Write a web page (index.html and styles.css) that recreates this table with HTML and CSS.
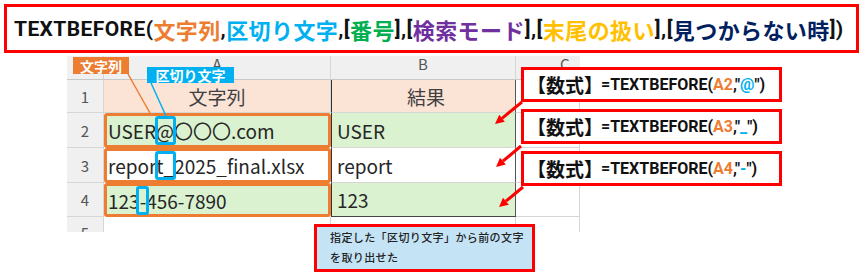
FILE: index.html
```html
<!DOCTYPE html>
<html lang="ja">
<head>
<meta charset="utf-8">
<link rel="stylesheet" href="styles.css">
</head>
<body>
<div class="page">
  <div class="title">TEXTBEFORE(<span class="j or">文字列</span>,<span class="j cy">区切り文字</span>,[<span class="j gr">番号</span>],[<span class="j pu">検索モード</span>],[<span class="j go">末尾の扱い</span>],[<span class="j nv">見つからない時</span>])</div>

  <div class="sheet">
    <div class="cell hd corner"></div>
    <div class="cell hd colh">A</div>
    <div class="cell hd colh">B</div>
    <div class="cell hd colh colc">C</div>

    <div class="cell rn">1</div>
    <div class="cell pk ctr">文字列</div>
    <div class="cell pk ctr bcol">結果</div>
    <div class="cell"></div>

    <div class="cell rn">2</div>
    <div class="cell gn hl">USER<span class="sep">@</span>〇〇〇.com</div>
    <div class="cell gn bcol">USER</div>
    <div class="cell"></div>

    <div class="cell rn">3</div>
    <div class="cell hl">repor<span class="sep">t_</span>2025_final.xlsx</div>
    <div class="cell bcol">report</div>
    <div class="cell"></div>

    <div class="cell rn">4</div>
    <div class="cell gn hl">123<span class="sep sep-w">-</span>456-7890</div>
    <div class="cell gn bcol blast">123</div>
    <div class="cell"></div>

    <div class="cell rn rn5">5</div>
    <div class="cell"></div>
    <div class="cell"></div>
    <div class="cell"></div>
  </div>

  <div class="tag tag-or">文字列</div>
  <div class="tag tag-cy">区切り文字</div>

  <div class="formulas">
    <div class="fbox"><span class="fj">【数式】</span>=TEXTBEFORE(<span class="or">A2</span>,"<span class="cy">@</span>")</div>
    <div class="fbox"><span class="fj">【数式】</span>=TEXTBEFORE(<span class="or">A3</span>,"<span class="cy">_</span>")</div>
    <div class="fbox"><span class="fj">【数式】</span>=TEXTBEFORE(<span class="or">A4</span>,"<span class="cy">-</span>")</div>
  </div>

  <div class="note">指定した「区切り文字」から前の文字<br>を取り出せた</div>

  <svg class="lines" width="868" height="278" viewBox="0 0 868 278">
    <line x1="128" y1="74" x2="150" y2="113" stroke="#ed7d31" stroke-width="1.5"/>
    <line x1="151" y1="83" x2="166" y2="116" stroke="#00b0f0" stroke-width="1.5"/>
    <line x1="522" y1="102" x2="502" y2="118.3" stroke="#ff0000" stroke-width="3"/>
    <polygon points="495,124 504.8,121.8 499.2,114.8" fill="#ff0000"/>
    <line x1="521" y1="146" x2="502.9" y2="161.2" stroke="#ff0000" stroke-width="3"/>
    <polygon points="496,167 505.8,164.6 500,157.7" fill="#ff0000"/>
    <line x1="523" y1="187" x2="505.9" y2="201.2" stroke="#ff0000" stroke-width="3"/>
    <polygon points="499,207 508.8,204.7 503,197.7" fill="#ff0000"/>
  </svg>
</div>
</body>
</html>
```

FILE: styles.css
```css
* { box-sizing: border-box; }
html, body { margin: 0; padding: 0; background: #fff; }
.page {
  position: relative;
  width: 868px;
  height: 278px;
  overflow: hidden;
  font-family: "Noto Sans CJK JP", sans-serif;
}
.title {
  margin: 4px 0 0 4px;
  width: 855px;
  height: 49px;
  border: 3px solid #ff0000;
  padding-left: 7px;
  display: flex;
  align-items: center;
  white-space: nowrap;
  font-family: Roboto, "Noto Sans CJK JP", sans-serif;
  font-weight: 700;
  font-size: 21px;
  letter-spacing: 0.4px;
  color: #111;
}
.title .j { font-family: "Noto Sans CJK JP", sans-serif; font-size: 22px; }
.or { color: #ed7d31; }
.cy { color: #00b0f0; }
.gr { color: #00b050; }
.pu { color: #7030a0; }
.go { color: #ffc000; }
.nv { color: #002060; }

.sheet {
  margin: 3px 0 0 67px;
  width: 513px;
  height: 176px;
  overflow: hidden;
  display: grid;
  grid-template-columns: 37px 227px 185px 64px;
  grid-template-rows: 24px 33px 35px 35px 34px 34px;
  background: #fff;
}
.cell {
  border-right: 1px solid #d6d6d6;
  border-bottom: 1px solid #d6d6d6;
  display: flex;
  align-items: center;
  padding-left: 4px;
  font-size: 19px;
  color: #262626;
  white-space: nowrap;
}
.hd {
  background: #f0f0f0;
  align-items: flex-start;
  justify-content: center;
  padding-left: 0;
  font-size: 15px;
  line-height: 15px;
  color: #555;
  border-bottom-color: #c8c8c8;
}
.colh { margin-top: -4px; padding-top: 4px; }
.colc { justify-content: flex-start; padding-left: 44px; border-right: none; }
.rn {
  background: #f0f0f0;
  justify-content: center;
  padding-left: 0;
  font-size: 15px;
  color: #555;
}
.rn5 { align-items: flex-start; padding-top: 5px; }
.pk { background: #fbe3d6; color: #404040; }
.gn { background: #daf2d0; }
.ctr { justify-content: center; padding-left: 0; }
.bcol { border-left: 1px solid #333; border-right: 1px solid #555; padding-left: 5px; }
.blast { border-bottom: 1px solid #444; }
.hl {
  border: 3px solid #ed7d31;
  border-radius: 3px;
  padding-left: 1px;
}
.sep { position: relative; }
.sep::after {
  content: "";
  position: absolute;
  left: -1px;
  right: -2px;
  top: -1px;
  bottom: -1px;
  border: 3px solid #00b0f0;
  border-radius: 3px;
}
.sep-w::after { left: -4px; right: -3px; }

.tag {
  position: absolute;
  color: #fff;
  font-weight: 700;
  font-size: 14px;
  line-height: 16px;
  display: flex;
  align-items: center;
  justify-content: center;
}
.tag-or { left: 73px; top: 57px; width: 56px; height: 17px; background: #ed7d31; }
.tag-cy { left: 147px; top: 67px; width: 87px; height: 16px; background: #00b0f0; }

.formulas {
  position: absolute;
  left: 521px;
  top: 67px;
  width: 261px;
  display: flex;
  flex-direction: column;
  gap: 7px;
}
.fbox {
  height: 35px;
  border: 3px solid #ff0000;
  background: #fff;
  display: flex;
  align-items: center;
  padding-left: 3px;
  white-space: nowrap;
  font-family: Roboto, "Noto Sans CJK JP", sans-serif;
  font-weight: 700;
  font-size: 16px;
  color: #111;
}
.fj { font-family: "Noto Sans CJK JP", sans-serif; font-size: 19px; margin-right: -2px; }

.note {
  position: absolute;
  left: 314px;
  top: 224px;
  width: 221px;
  height: 48px;
  border: 3px solid #ff0000;
  background: #c4e3f5;
  padding: 0 0 0 13px;
  font-size: 11px;
  line-height: 20px;
  letter-spacing: 0.4px;
  font-weight: 500;
  color: #222;
}
.lines { position: absolute; left: 0; top: 0; }
```
